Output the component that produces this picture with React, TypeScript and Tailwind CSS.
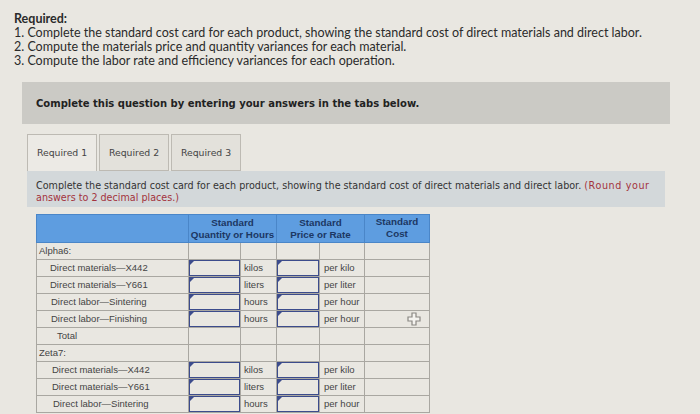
import { Fragment } from 'react';

type Row = { label: string; indent: string; qtyUnit?: string; priceUnit?: string; input?: boolean };

const products: { name: string; rows: Row[] }[] = [
  {
    name: 'Alpha6:',
    rows: [
      { label: 'Direct materials—X442', indent: 'pl-[13px]', qtyUnit: 'kilos', priceUnit: 'per kilo', input: true },
      { label: 'Direct materials—Y661', indent: 'pl-[13px]', qtyUnit: 'liters', priceUnit: 'per liter', input: true },
      { label: 'Direct labor—Sintering', indent: 'pl-[14px]', qtyUnit: 'hours', priceUnit: 'per hour', input: true },
      { label: 'Direct labor—Finishing', indent: 'pl-[14px]', qtyUnit: 'hours', priceUnit: 'per hour', input: true },
      { label: 'Total', indent: 'pl-[20px]' },
    ],
  },
  {
    name: 'Zeta7:',
    rows: [
      { label: 'Direct materials—X442', indent: 'pl-[15px]', qtyUnit: 'kilos', priceUnit: 'per kilo', input: true },
      { label: 'Direct materials—Y661', indent: 'pl-[15px]', qtyUnit: 'liters', priceUnit: 'per liter', input: true },
      { label: 'Direct labor—Sintering', indent: 'pl-[16px]', qtyUnit: 'hours', priceUnit: 'per hour', input: true },
    ],
  },
];

const cell = 'border border-[#a9a7a1] h-[17px] p-0 leading-[14px]';

const InputBox = () => (
  <div className="relative h-[16px] border-[1.5px] border-[#3c4c8c] bg-[#e9e7e1]">
    <span className="absolute left-0 top-0 h-0 w-0 border-t-[4px] border-r-[4px] border-t-[#3c4c8c] border-r-transparent" />
  </div>
);

const PlusCursor = () => (
  <svg width="14" height="14" viewBox="0 0 14 14" className="absolute right-[8px] top-[1px]">
    <path d="M5 1h4v4h4v4H9v4H5V9H1V5h4z" fill="#f4f3ef" stroke="#8a8883" strokeWidth="1.2" />
  </svg>
);

export default function App() {
  return (
    <div className="w-[700px] h-[414px] overflow-hidden bg-[#e9e7e1] relative">
      <div className="px-[14px] pt-[12px] text-[12.5px] leading-[14px] text-[#2b2b2b] font-['Lato',sans-serif]">
        <p className="font-bold">Required:</p>
        <p>1. Complete the standard cost card for each product, showing the standard cost of direct materials and direct labor.</p>
        <p>2. Compute the materials price and quantity variances for each material.</p>
        <p>3. Compute the labor rate and efficiency variances for each operation.</p>
      </div>

      <div className="ml-[22px] mt-[14px] w-[648px] h-[42px] bg-[#cbcac5] flex items-center pl-[14px]">
        <p className="font-['DejaVu_Sans',sans-serif] font-bold text-[10px] text-[#222]">
          Complete this question by entering your answers in the tabs below.
        </p>
      </div>

      <div className="ml-[27px] mt-[10px] flex gap-[2px] font-['DejaVu_Sans',sans-serif] text-[9.3px] text-[#444]">
        <div className="w-[70px] h-[37px] flex items-center justify-center border border-b-0 border-[#bdbab3] bg-[#eceae5]">Required 1</div>
        <div className="w-[70px] h-[37px] flex items-center justify-center border border-[#bdbab3] bg-[#e3e1db]">Required 2</div>
        <div className="w-[70px] h-[37px] flex items-center justify-center border border-[#bdbab3] bg-[#e3e1db]">Required 3</div>
      </div>

      <div className="ml-[27px] w-[638px] h-[36px] bg-[#d3d8da] pl-[9px] pt-[9px] overflow-hidden font-['DejaVu_Sans',sans-serif] text-[9.6px] leading-[12px] text-[#333] whitespace-nowrap">
        <p>
          Complete the standard cost card for each product, showing the standard cost of direct materials and direct labor.{' '}
          <span className="text-[#a3333d] tracking-[0.6px]">(Round your</span>
        </p>
        <p className="text-[#a3333d]">answers to 2 decimal places.)</p>
      </div>

      <table className="ml-[36px] mt-[7px] border-collapse table-fixed font-['Liberation_Sans',sans-serif] text-[9.5px] text-[#444]">
        <colgroup>
          <col className="w-[152px]" />
          <col className="w-[52px]" />
          <col className="w-[36px]" />
          <col className="w-[43px]" />
          <col className="w-[45px]" />
          <col className="w-[65px]" />
        </colgroup>
        <thead>
          <tr className="bg-[#5e9de0] text-[#1c3763] font-bold text-[9.8px] leading-[12px]">
            <th className="h-[28px] border border-[#4a86c8]" />
            <th colSpan={2} className="border border-[#4a86c8] text-center">Standard<br />Quantity or Hours</th>
            <th colSpan={2} className="border border-[#4a86c8] text-center">Standard<br />Price or Rate</th>
            <th className="border border-[#4a86c8] text-center align-top pt-[1px]">Standard<br />Cost</th>
          </tr>
        </thead>
        <tbody>
          {products.map((p) => (
            <Fragment key={p.name}>
              <tr>
                <td className={`${cell} pl-[2px]`}>{p.name}</td>
                <td className={cell} />
                <td className={cell} />
                <td className={cell} />
                <td className={cell} />
                <td className={cell} />
              </tr>
              {p.rows.map((r) => (
                <tr key={p.name + r.label}>
                  <td className={`${cell} ${r.indent}`}>{r.label}</td>
                  <td className={cell}>{r.input && <InputBox />}</td>
                  <td className={`${cell} pl-[3px]`}>{r.qtyUnit}</td>
                  <td className={cell}>{r.input && <InputBox />}</td>
                  <td className={`${cell} pl-[4px]`}>{r.priceUnit}</td>
                  <td className={`${cell} relative`}>
                    {p.name === 'Alpha6:' && r.label === 'Direct labor—Finishing' && <PlusCursor />}
                  </td>
                </tr>
              ))}
            </Fragment>
          ))}
        </tbody>
      </table>
    </div>
  );
}
